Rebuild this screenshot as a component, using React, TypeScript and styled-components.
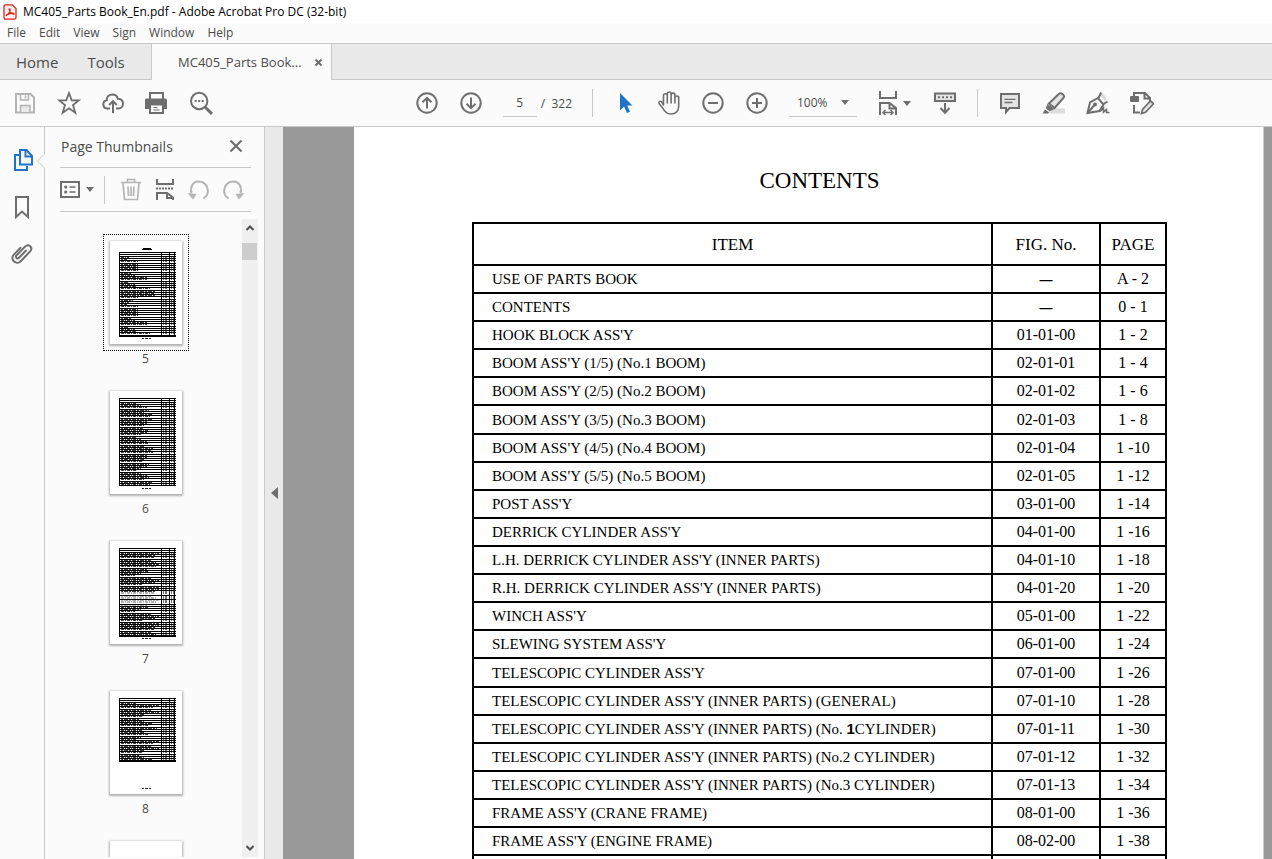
import React from 'react';
import styled, { createGlobalStyle } from 'styled-components';

const Global = createGlobalStyle`
  *, *::before, *::after { box-sizing: border-box; }
  html, body, #root { height: 100%; margin: 0; }
  body {
    font-family: "Open Sans", "Noto Sans", sans-serif;
    font-size: 12px;
    color: #4b4b4b;
    background: #fbfbfb;
    overflow: hidden;
  }
  button, input, select { font: inherit; color: inherit; }
  svg { display: block; flex: none; }
`;

const Window = styled.div`
  height: 100vh;
  display: flex;
  flex-direction: column;
`;

const TitleBar = styled.header`
  height: 23px;
  flex: none;
  display: flex;
  align-items: center;
  gap: 6px;
  padding-left: 3px;
  background: #fff;
  color: #000;
`;

const WindowTitle = styled.h1`
  margin: 0;
  font-size: 12px;
  font-weight: 400;
  white-space: nowrap;
`;

const MenuBar = styled.nav`
  height: 20px;
  flex: none;
  display: flex;
  align-items: center;
  gap: 13px;
  padding: 0 0 2px 7px;
`;

const PlainButton = styled.button`
  border: 0;
  padding: 0;
  background: none;
  white-space: nowrap;
`;

const TabBar = styled.div`
  height: 37px;
  flex: none;
  display: flex;
  background: #e9e9e9;
  border-top: 1px solid #c8c8c8;
`;

const HomeTabs = styled.div`
  width: 151px;
  display: flex;
  align-items: center;
  gap: 29px;
  padding-left: 16px;
  font-size: 15px;
  border-bottom: 1px solid #c8c8c8;
`;

const DocTab = styled.div`
  width: 181px;
  display: flex;
  align-items: center;
  justify-content: space-between;
  padding: 0 8px 0 26px;
  font-size: 13px;
  background: #fbfbfb;
  border: solid #c8c8c8;
  border-width: 0 1px;
`;

const TabFill = styled.div`
  flex: 1;
  border-bottom: 1px solid #c8c8c8;
`;

const Toolbar = styled.div`
  height: 47px;
  flex: none;
  display: flex;
  align-items: center;
  justify-content: space-between;
  border-bottom: 1px solid #c8c8c8;
`;

const ToolGroup = styled.div<{ $pad?: string }>`
  display: flex;
  align-items: center;
  gap: 20px;
  padding: ${(p) => p.$pad ?? '0'};
`;

const IconButton = styled.button<{ $w?: number; $h?: number }>`
  width: ${(p) => p.$w ?? 24}px;
  height: ${(p) => p.$h ?? 24}px;
  display: flex;
  align-items: center;
  justify-content: center;
  gap: 6px;
  border: 0;
  padding: 0;
  background: none;
`;

const Divider = styled.span`
  width: 1px;
  height: 28px;
  background: #c8c8c8;
`;

const PageField = styled.label`
  display: flex;
  align-items: center;
  gap: 4px;
  white-space: pre;
`;

const PageInput = styled.input`
  width: 34px;
  height: 28px;
  border: 0;
  border-bottom: 1px solid #c8c8c8;
  padding: 0;
  background: none;
  text-align: center;
  outline: 0;
`;

const ZoomField = styled.div`
  width: 68px;
  height: 28px;
  display: grid;
  align-items: center;
  border-bottom: 1px solid #c8c8c8;
  > * { grid-area: 1 / 1; }
  > svg { justify-self: end; margin-right: 8px; pointer-events: none; }
`;

const ZoomSelect = styled.select`
  width: 100%;
  height: 27px;
  appearance: none;
  border: 0;
  padding: 0 0 0 8px;
  background: none;
  outline: 0;
`;

const Body = styled.div`
  flex: 1;
  min-height: 0;
  display: flex;
`;

const Rail = styled.nav`
  width: 45px;
  flex: none;
  display: flex;
  flex-direction: column;
  align-items: flex-start;
  gap: 23px;
  padding: 21px 0 0 10px;
  border-right: 1px solid #c8c8c8;
`;

const RailItem = styled.div`
  position: relative;
  > svg { position: absolute; left: 26px; top: 5px; }
`;

const Panel = styled.aside`
  width: 220px;
  flex: none;
  display: flex;
  flex-direction: column;
  border-right: 1px solid #c8c8c8;
`;

const PanelHead = styled.div`
  height: 41px;
  flex: none;
  display: flex;
  align-items: center;
  justify-content: space-between;
  margin: 0 13px 0 15px;
  padding: 0 7px 2px 1px;
  border-bottom: 1px solid #c8c8c8;
`;

const PanelTitle = styled.h2`
  margin: 0;
  font-size: 14px;
  font-weight: 400;
`;

const PanelTools = styled.div`
  height: 44px;
  flex: none;
  display: flex;
  align-items: center;
  justify-content: space-between;
  margin: 0 13px 0 15px;
  padding-right: 6px;
  border-bottom: 1px solid #c8c8c8;
`;

const PanelToolSet = styled.div`
  display: flex;
  align-items: center;
  gap: 10px;
`;

const PanelBody = styled.div`
  flex: 1;
  min-height: 0;
  display: flex;
  justify-content: flex-end;
  padding: 7px 6px 2px 0;
`;

const ThumbList = styled.ol`
  flex: 1;
  margin: 0;
  padding: 15px 0 0 4px;
  list-style: none;
  overflow: hidden;
  display: flex;
  flex-direction: column;
  align-items: center;
`;

const ThumbItem = styled.li<{ $current?: boolean }>`
  height: 150px;
  flex: none;
  text-align: center;
  line-height: 16px;
  > div {
    padding: 6px;
    border: 1px ${(p) => (p.$current ? 'dotted #000' : 'solid transparent')};
  }
  svg { background: #fff; box-shadow: 0 1px 2px 1px rgba(0, 0, 0, 0.3); }
`;

const ScrollTrack = styled.div`
  width: 16px;
  flex: none;
  display: flex;
  flex-direction: column;
  background: #f0f0f0;
`;

const ScrollThumb = styled.div`
  width: 15px;
  height: 17px;
  margin: 6px 0 auto;
  background: #cdcdcd;
`;

const Collapse = styled.button`
  width: 18px;
  flex: none;
  border: 0;
  padding: 0 0 0 6px;
  background: #e9e9e9;
`;

const Canvas = styled.main`
  flex: 1;
  min-width: 0;
  padding: 0 8px 0 71px;
  background: #999;
  overflow: hidden;
`;

const Sheet = styled.article`
  padding: 36px 96px 0 118px;
  background: #fff;
  color: #000;
  border-right: 1px solid #ccc;
  font-family: "Liberation Serif", serif;
`;

const SheetTitle = styled.h2`
  margin: 0 0 24px;
  font-size: 23px;
  line-height: 35px;
  font-weight: 400;
  text-align: center;
`;

const ContentsTable = styled.table`
  width: 100%;
  table-layout: fixed;
  border-collapse: separate;
  border-spacing: 0;
  border: solid #000;
  border-width: 2px 0 0 2px;
  font-size: 16px;
  th, td {
    padding: 0;
    border: solid #000;
    border-width: 0 2px 2px 0;
    font-weight: 400;
    text-align: center;
    white-space: pre;
  }
  th { height: 42px; padding-top: 2px; font-size: 17px; }
  td { height: 28px; line-height: 24px; }
  td:first-child { padding-left: 18px; font-size: 15px; text-align: left; }
  tbody tr:nth-child(9n + 6) td { height: 29px; }
`;

const FigHead = styled.th` width: 108px; `;
const PageHead = styled.th` width: 66px; `;

const Bold = styled.b`
  font-family: "Liberation Sans", sans-serif;
`;

const Dash = styled(Bold)`
  font-size: 13px;
`;

const G = '#6e6e6e';

type IconProps = { w?: number; h?: number; color?: string; sw?: number; children: React.ReactNode };
const Icon = ({ w = 24, h = 24, color = G, sw = 2, children }: IconProps) => (
  <svg width={w} height={h} viewBox={`0 0 ${w} ${h}`} fill="none" stroke={color} strokeWidth={sw} aria-hidden="true">
    {children}
  </svg>
);

const Caret = () => (
  <svg width="8" height="5" viewBox="0 0 8 5" aria-hidden="true"><path d="M0 0h8L4 5z" fill={G} /></svg>
);

const AcrobatLogo = () => (
  <svg width="14" height="16" viewBox="0 0 14 16" fill="none" stroke="#d9261c" aria-hidden="true">
    <path d="M2.800 .8h6.500l3.700 3.800v8.800q0 1.800-1.800 1.800H2.800Q1 15.200 1 13.400V2.600Q1 .8 2.800 .8z" fill="#fff0ee" strokeWidth="1.300" />
    <path d="M3.500 11.300c2-.8 4-3.500 3.500-6-.3-1-1-.2-.6 1 .6 2 2.300 3.600 4 3.800 1.300 0 .6-1-.8-1-2 0-4 .7-5.500 1.600-.8.500-1 .8-.6.600z" strokeWidth="1.400" />
  </svg>
);

const icons = {
  save: (
    <Icon color="#b4b4b4">
      <path d="M3 3h14.500L21 6.500V21.500H3z" /><path d="M7.500 3v6h8V3" strokeWidth="1.500" /><path d="M12.500 4.500v3" strokeWidth="1.500" /><path d="M7.500 21v-6.500h9.500v6.500" fill="#e9e9e9" strokeWidth="1.500" />
    </Icon>
  ),
  star: <Icon><path d="M12 2l2.700 7.300H22l-6 4.800 2.300 7.700L12 17.300l-6.300 4.500L8 14.100 2 9.300h7.300z" strokeWidth="1.800" /></Icon>,
  cloud: (
    <Icon>
      <path d="M9 17.500H6.200a4.200 4.200 0 0 1-.5-8.300C5.400 5.700 8.300 3.500 11.300 3.500c2.800 0 4.900 1.700 5.500 4.200 3.300-.1 5.200 2.100 5.200 4.800s-2 5-4.700 5H15" />
      <path d="M12 22V10.500M8.200 14L12 10.200l3.800 3.800" />
    </Icon>
  ),
  print: (
    <Icon>
      <path d="M5 8V2h13v6" /><path d="M0 9q0-1.500 1.500-1.500h19q1.500 0 1.500 1.500v9h-4v-3H4v3H0z" fill={G} stroke="none" />
      <path d="M5 13.500h13V22H5z" fill="#fbfbfb" /><path d="M8.500 16.500h4M8.500 19h6" strokeWidth="1" />
    </Icon>
  ),
  find: (
    <Icon>
      <circle cx="10.200" cy="10" r="8.200" /><path d="M16 16l7 6.800" strokeWidth="3" />
      <path d="M5.700 10h2M9.200 10h2M12.700 10h2" />
    </Icon>
  ),
  up: <Icon><circle cx="12" cy="12" r="9.700" /><path d="M12 17.500V7M7.500 11.300L12 6.800l4.500 4.500" /></Icon>,
  down: <Icon><circle cx="12" cy="12" r="9.700" /><path d="M12 6.500V17M7.500 12.700l4.500 4.500 4.500-4.500" /></Icon>,
  pointer: <Icon><path d="M7 2v17.500l4-4L14 22l3-1.300-2.800-6.200h5.300z" fill="#1f73c8" stroke="none" /></Icon>,
  hand: (
    <Icon sw={1.6}>
      <path d="M6.500 14V4.500c0-2.300 3.800-2.300 3.800 0V12M10.300 4.500V2.800c0-2.400 3.800-2.400 3.800 0V12M14.100 3.800c0-2.200 3.800-2.200 3.800 0V12M17.900 6.500c0-2 3.800-2 3.800 0V15c0 5-3 8-7.700 8-4 0-6.300-2-8-5.500l-3.800-4.700c-1.200-1.900 1-3.300 2.600-1.800L6.500 14" strokeLinecap="round" strokeLinejoin="round" />
    </Icon>
  ),
  minus: <Icon><circle cx="12" cy="12" r="9.700" /><path d="M7 12h10" /></Icon>,
  plus: <Icon><circle cx="12" cy="12" r="9.700" /><path d="M7 12h10M12 7v10" /></Icon>,
  fit: (
    <Icon w={18}>
      <path d="M1 0v7h16V0" /><path d="M1 24V12h9.500l6.500 5v7M10.500 12v5.500H17" />
      <path d="M4 21.500h10M6.500 19L4 21.500 6.500 24M11.500 19l2.500 2.500-2.500 2.500" strokeWidth="1.500" />
    </Icon>
  ),
  read: (
    <Icon>
      <path d="M2 2.500h20v7.500H2z" fill="#e4e4e4" /><path d="M5 6.200h14" strokeDasharray="2 2" />
      <path d="M12 12v9.500M7.500 17l4.500 4.700 4.500-4.700" />
    </Icon>
  ),
  comment: (
    <Icon>
      <path d="M3 3h18v14h-9.500L8 21v-4H3z" fill="#e4e4e4" /><path d="M6.500 8.300h11M6.500 11.500h8" strokeWidth="1.300" />
    </Icon>
  ),
  highlight: (
    <Icon>
      <path d="M10 17.500h13v5H5z" fill="#dcdcdc" stroke="none" />
      <path d="M7 12.500L17 2.800q1.800-1.200 3.800.5t.7 3.500L12.500 17z" fill="#e4e4e4" /><path d="M5.500 13.500l6 4.500-4 1.700-3-2.200z" fill={G} strokeWidth="1" />
      <path d="M3 18.500l4 2.800-1 1.200H.5z" fill={G} stroke="none" />
    </Icon>
  ),
  sign: (
    <Icon>
      <path d="M13 3l3-1.500 5 6-2 3z" fill="#dcdcdc" stroke="none" />
      <path d="M1.500 22L4 11.500l8-4.500 5.500 6.500-4 6.500z" /><path d="M12.500 7l2.700-5.500M17.500 13l4-2.500M2 21.500l6-7" />
      <circle cx="9" cy="13.500" r="1" /><path d="M14 20.500l3.500-3.500v4l3-2.500v3h3" strokeWidth="1.600" />
    </Icon>
  ),
  edit: (
    <Icon>
      <path d="M4 5V2h11l5 5v4M14.500 2v5.500H20M4 14v7.500h6" /><rect x="0" y="5" width="9" height="6" rx="1" fill={G} stroke="none" />
      <path d="M11.500 22.500l1-4 8-8.500 3 2.800-8 8.500z" fill="#e4e4e4" strokeWidth="1.700" />
    </Icon>
  ),
  pages: (
    <Icon color="#1f73c8">
      <path d="M10 2h6.500l5.500 6v8.500H10z" /><path d="M15.500 2v6.500H22" /><path d="M9 7H5v15h12v-4" />
    </Icon>
  ),
  bookmark: <Icon><path d="M6 2h12v20l-6-5.500L6 22z" /></Icon>,
  clip: (
    <Icon><path strokeLinecap="round" d="M16 8.500l-7 7.200c-1.800 1.800-4.200-.5-2.500-2.300l8.800-9c3.300-3.100 8 1.100 5 4.700L11 19c-4.500 4.800-11.500-1.300-7.300-6.200l6.800-7" /></Icon>
  ),
  options: (
    <Icon w={20} h={18}>
      <path d="M1 1h18v15H1z" /><path d="M9.500 6h6M9.500 11h6" strokeWidth="1.600" />
      <circle cx="5.700" cy="6" r="1.600" fill={G} stroke="none" /><circle cx="5.700" cy="11" r="1.600" fill={G} stroke="none" />
    </Icon>
  ),
  trash: (
    <Icon color="#b4b4b4"><path d="M2 4.500h20M8.500 4V1.500h7V4M4 5l1.500 16.500h13L20 5M9 8.500l.5 9.500M12 8.500V18M15 8.500l-.5 9.500" strokeWidth="1.700" /></Icon>
  ),
  split: (
    <Icon w={18}>
      <path d="M1 1v5h16V1" /><path d="M0 10.500h18" strokeDasharray="2 1" /><path d="M1 22v-7h10l6 4.500V22M11 15v5h6" />
    </Icon>
  ),
  undo: <Icon color="#b4b4b4"><path d="M16.500 20.500c8-5 4-17-5-17C6 3.500 3 8.500 4.500 15" /><path d="M.5 15l9 1-3.500 5.500z" fill="#b4b4b4" stroke="none" /></Icon>,
  redo: <Icon color="#b4b4b4"><path d="M7.500 20.500c-8-5-4-17 5-17C18 3.500 21 8.500 19.500 15" /><path d="M23.500 15l-9 1 3.500 5.500z" fill="#b4b4b4" stroke="none" /></Icon>,
  close: <Icon w={14} h={14}><path d="M1.500 1.500l11 11M12.500 1.500l-11 11" strokeWidth="2.200" /></Icon>,
};

const Tool = ({ icon, label, w, h }: { icon: keyof typeof icons; label: string; w?: number; h?: number }) => (
  <IconButton type="button" aria-label={label} $w={w} $h={h}>{icons[icon]}</IconButton>
);

/* Miniature of a contents sheet: ruled rows with flecks of grey standing in for the words. */
type Mini = { top: number; bottom: number; title?: boolean; footer: number; light?: [number, number]; widths: number[] };
const MiniSheet = ({ mini }: { mini: Mini }) => {
  const lines: number[] = [];
  for (let i = 0; mini.top + 2 + i * 2.25 < mini.bottom; i++) lines.push(Math.floor(mini.top + 2 + i * 2.25));
  const h = mini.bottom - mini.top;
  return (
    <svg width="72" height="103" viewBox="0 0 72 103" shapeRendering="crispEdges" aria-hidden="true">
      {mini.title && <path d="M32 8h10v1H32zM33 7h8v1h-8z" />}
      <path d={`M9 ${mini.top}h57v1H9zM9 ${mini.bottom}h57v1H9z`} />
      <path d={[9, 51, 59, 64].map((x) => `M${x} ${mini.top}h1v${h}h-1z`).join('')} />
      {lines.map((y, i) => {
        const light = mini.light && y >= mini.light[0] && y <= mini.light[1];
        const w = mini.widths[i % mini.widths.length];
        return (
          <g key={y}>
            {!(light && i % 2) && <path d={`M9 ${y}h57v1H9z`} />}
            {i > 0 && (
              <>
                <path d={`M11 ${y + 1}h${w}`} stroke="#000" strokeWidth="2" strokeDasharray={i % 2 ? '3 1 1 1' : '2 1 4 1'} opacity={light ? 0.3 : 0.75} />
                <path d={`M53 ${y + 1}h5M61 ${y + 1}h3`} stroke="#000" strokeWidth="2" strokeDasharray="1 1 2 1" opacity="0.55" />
              </>
            )}
          </g>
        );
      })}
      <path d={`M32 ${mini.footer}h2v1h-2zM35 ${mini.footer}h3v1h-3zM39 ${mini.footer}h2v1h-2z`} fill="#222" />
    </svg>
  );
};

const minis: { page: number; mini: Mini }[] = [
  { page: 5, mini: { top: 11, bottom: 95, title: true, footer: 97, widths: [12, 8, 6, 17, 17, 17, 17, 17, 10, 14, 26, 26, 8, 14, 16, 30, 34, 34, 34, 18] } },
  { page: 6, mini: { top: 7, bottom: 94, footer: 97, widths: [20, 16, 20, 26, 28, 24, 32, 30, 32, 26, 26, 24, 22, 28, 26] } },
  { page: 7, mini: { top: 7, bottom: 95, footer: 97, light: [51, 63], widths: [38, 38, 34, 34, 30, 36, 38, 36, 26, 28, 20, 14, 30, 38, 34, 22] } },
  { page: 8, mini: { top: 7, bottom: 70, footer: 97, widths: [20, 16, 38, 32, 30, 38, 24, 22, 18, 24, 32, 28, 36, 22, 24, 28] } },
];

const rows: [React.ReactNode, React.ReactNode, string][] = [
  ['USE OF PARTS BOOK', <Dash>—</Dash>, 'A - 2'],
  ['CONTENTS', <Dash>—</Dash>, '0 - 1'],
  ["HOOK BLOCK ASS'Y", '01-01-00', '1 - 2'],
  ["BOOM ASS'Y (1/5) (No.1 BOOM)", '02-01-01', '1 - 4'],
  ["BOOM ASS'Y (2/5) (No.2 BOOM)", '02-01-02', '1 - 6'],
  ["BOOM ASS'Y (3/5) (No.3 BOOM)", '02-01-03', '1 - 8'],
  ["BOOM ASS'Y (4/5) (No.4 BOOM)", '02-01-04', '1 -10'],
  ["BOOM ASS'Y (5/5) (No.5 BOOM)", '02-01-05', '1 -12'],
  ["POST ASS'Y", '03-01-00', '1 -14'],
  ["DERRICK CYLINDER ASS'Y", '04-01-00', '1 -16'],
  ["L.H. DERRICK CYLINDER ASS'Y (INNER PARTS)", '04-01-10', '1 -18'],
  ["R.H. DERRICK CYLINDER ASS'Y (INNER PARTS)", '04-01-20', '1 -20'],
  ["WINCH ASS'Y", '05-01-00', '1 -22'],
  ["SLEWING SYSTEM ASS'Y", '06-01-00', '1 -24'],
  ["TELESCOPIC CYLINDER ASS'Y", '07-01-00', '1 -26'],
  ["TELESCOPIC CYLINDER ASS'Y (INNER PARTS) (GENERAL)", '07-01-10', '1 -28'],
  [<>TELESCOPIC CYLINDER ASS'Y (INNER PARTS) (No. <Bold>1</Bold>CYLINDER)</>, '07-01-11', '1 -30'],
  ["TELESCOPIC CYLINDER ASS'Y (INNER PARTS) (No.2 CYLINDER)", '07-01-12', '1 -32'],
  ["TELESCOPIC CYLINDER ASS'Y (INNER PARTS) (No.3 CYLINDER)", '07-01-13', '1 -34'],
  ["FRAME ASS'Y (CRANE FRAME)", '08-01-00', '1 -36'],
  ["FRAME ASS'Y (ENGINE FRAME)", '08-02-00', '1 -38'],
  ['', '', ''],
];

export default function App() {
  return (
    <Window>
      <Global />
      <TitleBar>
        <AcrobatLogo />
        <WindowTitle>MC405_Parts Book_En.pdf - Adobe Acrobat Pro DC (32-bit)</WindowTitle>
      </TitleBar>
      <MenuBar>
        {['File', 'Edit', 'View', 'Sign', 'Window', 'Help'].map((m) => <PlainButton key={m} type="button">{m}</PlainButton>)}
      </MenuBar>
      <TabBar>
        <HomeTabs>
          <PlainButton type="button">Home</PlainButton>
          <PlainButton type="button">Tools</PlainButton>
        </HomeTabs>
        <DocTab>
          <PlainButton type="button">MC405_Parts Book...</PlainButton>
          <IconButton type="button" aria-label="Close tab" $w={9} $h={9}>
            <Icon w={9} h={9}><path d="M1.500 1.500l6 6M7.500 1.500l-6 6" /></Icon>
          </IconButton>
        </DocTab>
        <TabFill />
      </TabBar>
      <Toolbar>
        <ToolGroup $pad="0 0 0 13px">
          <Tool icon="save" label="Save" />
          <Tool icon="star" label="Star" />
          <Tool icon="cloud" label="Upload" />
          <Tool icon="print" label="Print" />
          <Tool icon="find" label="Find" />
        </ToolGroup>
        <ToolGroup $pad="0 118px 0 0">
          <Tool icon="up" label="Previous page" />
          <Tool icon="down" label="Next page" />
          <PageField>
            <PageInput defaultValue="5" aria-label="Page" />
            /  322
          </PageField>
          <Divider />
          <Tool icon="pointer" label="Select" />
          <Tool icon="hand" label="Pan" />
          <Tool icon="minus" label="Zoom out" />
          <Tool icon="plus" label="Zoom in" />
          <ZoomField>
            <ZoomSelect aria-label="Zoom level"><option>100%</option></ZoomSelect>
            <Caret />
          </ZoomField>
          <IconButton type="button" aria-label="Fit width" $w={36}>{icons.fit}<Caret /></IconButton>
          <Tool icon="read" label="Scroll mode" />
          <Divider />
          <Tool icon="comment" label="Comment" />
          <Tool icon="highlight" label="Highlight" />
          <Tool icon="sign" label="Sign" />
          <Tool icon="edit" label="Edit" />
        </ToolGroup>
      </Toolbar>
      <Body>
        <Rail>
          <RailItem>
            <Tool icon="pages" label="Page thumbnails" />
            <svg width="9" height="16" viewBox="0 0 9 16" fill="#fbfbfb" stroke="#c8c8c8"><path d="M9 0v.5L1.500 8 9 15.500" /></svg>
          </RailItem>
          <Tool icon="bookmark" label="Bookmarks" />
          <Tool icon="clip" label="Attachments" />
        </Rail>
        <Panel>
          <PanelHead>
            <PanelTitle>Page Thumbnails</PanelTitle>
            <Tool icon="close" label="Close panel" w={16} />
          </PanelHead>
          <PanelTools>
            <PanelToolSet>
              <IconButton type="button" aria-label="Options" $w={34}>{icons.options}<Caret /></IconButton>
              <Divider />
            </PanelToolSet>
            <PanelToolSet>
              <Tool icon="trash" label="Delete" />
              <Tool icon="split" label="Split" />
              <Tool icon="undo" label="Rotate left" />
              <Tool icon="redo" label="Rotate right" />
            </PanelToolSet>
          </PanelTools>
          <PanelBody>
            <ThumbList>
              {minis.map(({ page, mini }) => (
                <ThumbItem key={page} $current={page === 5}>
                  <div><MiniSheet mini={mini} /></div>
                  {page}
                </ThumbItem>
              ))}
              <ThumbItem>
                <div><svg width="72" height="103" /></div>
              </ThumbItem>
            </ThumbList>
            <ScrollTrack>
              <IconButton type="button" aria-label="Scroll up" $w={15} $h={18}>
                <Icon w={8} h={6} color="#505050"><path d="M.5 5L4 1.500 7.500 5" /></Icon>
              </IconButton>
              <ScrollThumb />
              <IconButton type="button" aria-label="Scroll down" $w={15} $h={18}>
                <Icon w={8} h={6} color="#505050"><path d="M.5 1L4 4.500 7.500 1" /></Icon>
              </IconButton>
            </ScrollTrack>
          </PanelBody>
        </Panel>
        <Collapse type="button" aria-label="Collapse panel">
          <svg width="7" height="12" viewBox="0 0 7 12"><path d="M7 0v12L0 6z" fill={G} /></svg>
        </Collapse>
        <Canvas>
          <Sheet>
            <SheetTitle>CONTENTS</SheetTitle>
            <ContentsTable>
              <thead>
                <tr><th>ITEM</th><FigHead>FIG. No.</FigHead><PageHead>PAGE</PageHead></tr>
              </thead>
              <tbody>
                {rows.map(([item, fig, page], i) => (
                  <tr key={i}><td>{item}</td><td>{fig}</td><td>{page}</td></tr>
                ))}
              </tbody>
            </ContentsTable>
          </Sheet>
        </Canvas>
      </Body>
    </Window>
  );
}
